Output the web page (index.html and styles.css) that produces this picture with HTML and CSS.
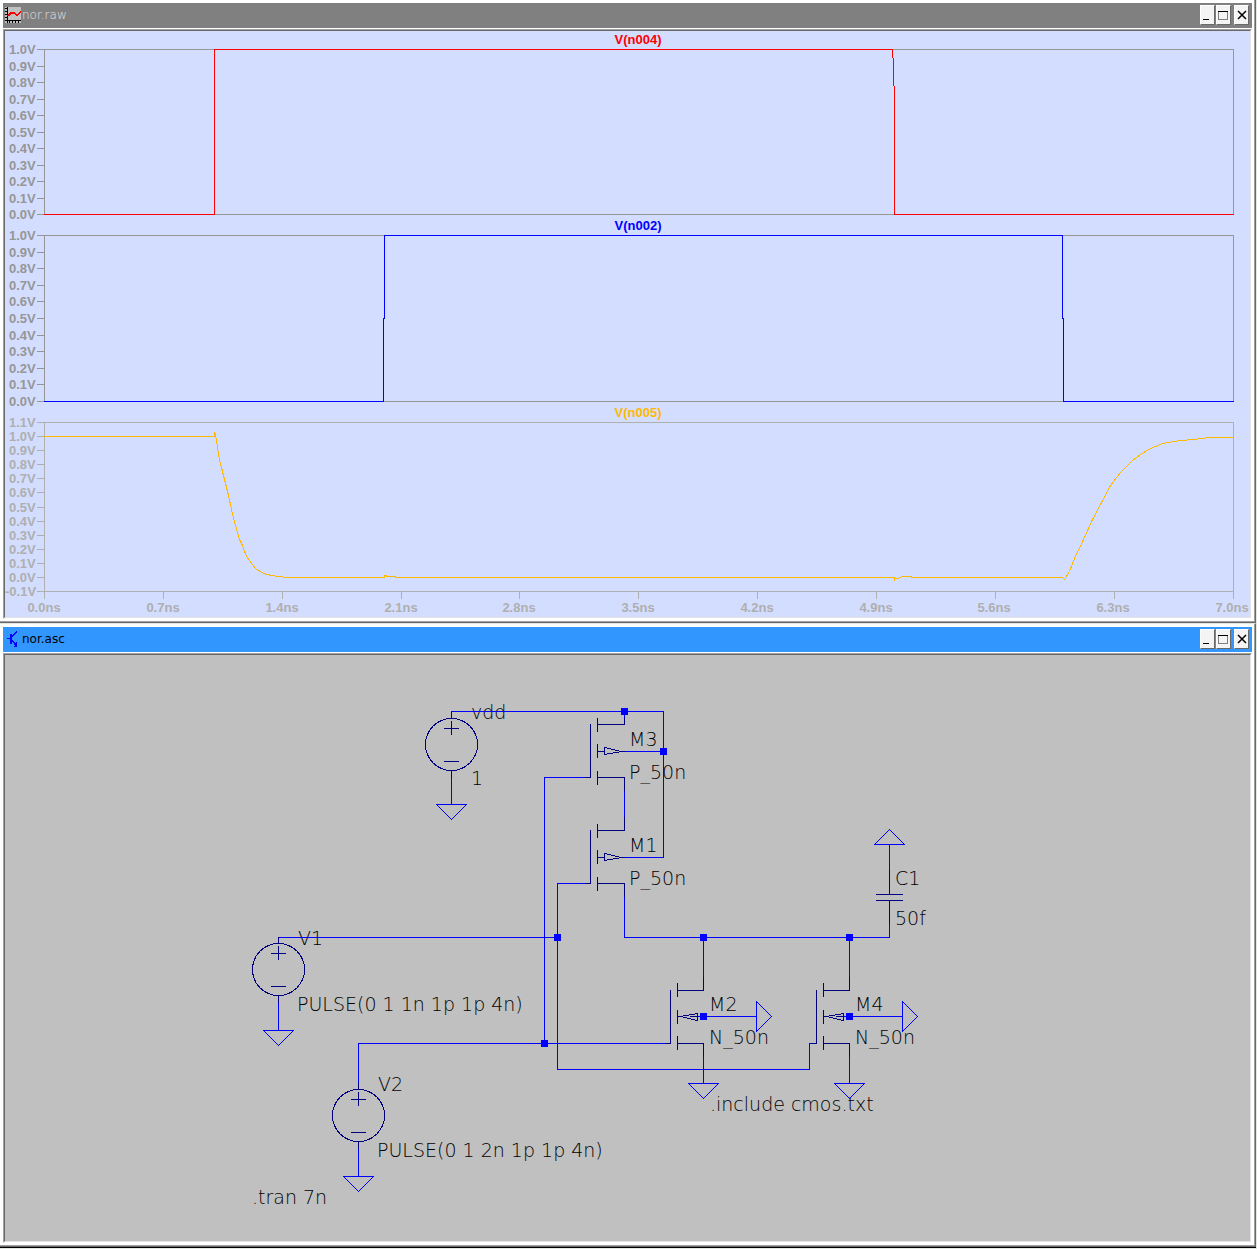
FILE: index.html
```html
<!DOCTYPE html>
<html lang="en">
<head>
<meta charset="utf-8">
<title>nor</title>
<link rel="stylesheet" href="styles.css">
</head>
<body>
<main class="workspace">
<section class="window">
  <header class="titlebar titlebar-inactive">
    <svg class="title-icon" viewBox="0 0 16 16" width="16" height="16" aria-hidden="true">
      <path fill="#c0c0c0" d="M0 0h16v16H0z"/>
      <path fill="#000" d="M2 0h1v16H2zM2 13h14v1H2zM0 1h2v1H0zM0 4h2v1H0zM0 7h2v1H0zM0 10h2v1H0zM0 13h2v1H0zM4 14h1v2H4zM7 14h1v2H7zM10 14h1v2h-1zM13 14h1v2h-1z"/>
      <path fill="none" stroke="#f00" stroke-width="2" d="M3 9l3-3.500h3l2 2h2l3-3"/>
    </svg>
    <h1 class="title">nor.raw</h1>
    <div class="controls">
      <button class="control" type="button" aria-label="Minimize"><svg viewBox="0 0 13 18" width="13" height="18"><path d="M2 13h6v1H2z"/></svg></button>
      <button class="control" type="button" aria-label="Maximize"><svg viewBox="0 0 13 18" width="13" height="18"><path d="M1 5h10v1H1z"/><path class="thin" d="M1 6v8h10V6h-1v7H2V6z"/></svg></button>
      <button class="control control-close" type="button" aria-label="Close"><svg viewBox="0 0 13 18" width="13" height="18"><path class="cross" d="M3 5l8 8M11 5l-8 8"/></svg></button>
    </div>
  </header>
  <div class="frame"><div class="canvas canvas-plot">
    <svg class="drawing" viewBox="5 31 1245 586" role="img" aria-label="Waveforms">
      <g class="axis-text">
        <text x="9" y="54">1.0V</text><text x="9" y="71">0.9V</text><text x="9" y="87">0.8V</text><text x="9" y="104">0.7V</text><text x="9" y="120">0.6V</text><text x="9" y="137">0.5V</text><text x="9" y="153">0.4V</text><text x="9" y="170">0.3V</text><text x="9" y="186">0.2V</text><text x="9" y="203">0.1V</text><text x="9" y="219">0.0V</text>
        <text x="9" y="240">1.0V</text><text x="9" y="257">0.9V</text><text x="9" y="273">0.8V</text><text x="9" y="290">0.7V</text><text x="9" y="306">0.6V</text><text x="9" y="323">0.5V</text><text x="9" y="340">0.4V</text><text x="9" y="356">0.3V</text><text x="9" y="373">0.2V</text><text x="9" y="389">0.1V</text><text x="9" y="406">0.0V</text>
      </g>
      <g class="axis-text axis-text-light">
        <text x="9" y="427">1.1V</text><text x="9" y="441">1.0V</text><text x="9" y="455">0.9V</text><text x="9" y="469">0.8V</text><text x="9" y="483">0.7V</text><text x="9" y="497">0.6V</text><text x="9" y="512">0.5V</text><text x="9" y="526">0.4V</text><text x="9" y="540">0.3V</text><text x="9" y="554">0.2V</text><text x="9" y="568">0.1V</text><text x="9" y="582">0.0V</text><text x="5" y="596">-0.1V</text>
      </g>
      <g class="axis-text axis-text-light centered">
        <text x="44" y="612">0.0ns</text><text x="163" y="612">0.7ns</text><text x="282" y="612">1.4ns</text><text x="401" y="612">2.1ns</text><text x="519" y="612">2.8ns</text><text x="638" y="612">3.5ns</text><text x="757" y="612">4.2ns</text><text x="876" y="612">4.9ns</text><text x="994" y="612">5.6ns</text><text x="1113" y="612">6.3ns</text><text x="1232" y="612">7.0ns</text>
      </g>
      <g class="trace-name centered">
        <text class="red" x="638" y="44">V(n004)</text>
        <text class="blue" x="638" y="230">V(n002)</text>
        <text class="amber" x="638" y="417">V(n005)</text>
      </g>
      <g class="lines" transform="translate(.5 .5)">
        <path class="axis" d="M44 49H1233V214H44ZM37 49h7M37 66h7M37 82h7M37 99h7M37 115h7M37 132h7M37 148h7M37 165h7M37 181h7M37 198h7M37 214h7"/>
        <path class="axis" d="M44 235H1233V401H44ZM37 235h7M37 252h7M37 268h7M37 285h7M37 301h7M37 318h7M37 335h7M37 351h7M37 368h7M37 384h7M37 401h7"/>
        <path class="axis axis-light" d="M44 422H1233V591H44ZM37 422h7M37 436h7M37 450h7M37 464h7M37 478h7M37 492h7M37 507h7M37 521h7M37 535h7M37 549h7M37 563h7M37 577h7M37 591h7M44 591v7M163 591v7M282 591v7M401 591v7M519 591v7M638 591v7M757 591v7M876 591v7M995 591v7M1114 591v7M1233 591v7"/>
        <path class="trace red-line" d="M44 214H214V49H892V57L893 58V85L894 86V214H1233"/>
        <path class="trace blue-line" d="M44 401H383V318H384V235H1062V318H1063V401H1233"/>
        <path class="trace amber-line" d="M44 436H214V432L215 434L219 460L221 467L228 495L233 518L239 539L242 545L246 556L255 568L263 573L271 575L277 576L287 577H384V575L388 576H395V577H894V580V578H897L902 576H911V577H1062L1064 579L1066 576L1069 571L1074 558L1083 539L1092 519L1101 502L1110 485L1120 472L1132 460L1140 454L1148 449L1162 443L1180 440L1193 439L1208 437H1233"/>
      </g>
    </svg>
  </div></div>
</section>

<section class="window">
  <header class="titlebar titlebar-active">
    <svg class="title-icon" viewBox="0 0 16 16" width="16" height="16" aria-hidden="true">
      <path fill="none" stroke="#00f" stroke-width="1" d="M2 7.500h4M7 5.500l5-5M7 9.500l5 5"/>
      <path fill="#00f" d="M5 3h2v10H5zM12 11v5H9v-1h1v-1h-1v-1h2v-2z"/>
    </svg>
    <h2 class="title">nor.asc</h2>
    <div class="controls">
      <button class="control" type="button" aria-label="Minimize"><svg viewBox="0 0 13 18" width="13" height="18"><path d="M2 13h6v1H2z"/></svg></button>
      <button class="control" type="button" aria-label="Maximize"><svg viewBox="0 0 13 18" width="13" height="18"><path d="M1 5h10v1H1z"/><path class="thin" d="M1 6v8h10V6h-1v7H2V6z"/></svg></button>
      <button class="control control-close" type="button" aria-label="Close"><svg viewBox="0 0 13 18" width="13" height="18"><path class="cross" d="M3 5l8 8M11 5l-8 8"/></svg></button>
    </div>
  </header>
  <div class="frame"><div class="canvas canvas-schematic">
    <svg class="drawing" viewBox="5 655 1245 586" role="img" aria-label="NOR gate schematic">
      <defs>
        <g id="source"><circle r="26"/><path d="M0 -32V-26M-7 -16H7M0 -23V-10M-7 17H7M0 26V33"/></g>
        <g id="ground"><path d="M-15 0H15L0 15Z"/></g>
        <g id="pmos"><path d="M-5 53H0V0M7 -6V7M7 20V33M7 47V60M7 0H34V-6M7 27H14M14 23V30L31 27ZM31 27H34M7 53H34V66"/></g>
        <g id="nmos"><path d="M-5 53H0V0M7 -7V6M7 20V33M7 46V59M7 0H33V-13M7 26H10L27 23V30L10 26M20 26H27M7 53H33V66"/></g>
        <path id="node" d="M-3 -3H4V4H-3Z"/>
      </defs>
      <g class="label">
        <text x="471" y="719">vdd</text><text x="471" y="785">1</text>
        <text x="629" y="746">M3</text><text x="629" y="779">P_50n</text>
        <text x="629" y="852">M1</text><text x="629" y="885">P_50n</text>
        <text x="895" y="885">C1</text><text x="895" y="925">50f</text>
        <text x="709" y="1011">M2</text><text x="709" y="1044">N_50n</text>
        <text x="855" y="1011">M4</text><text x="855" y="1044">N_50n</text>
        <text x="298" y="945">V1</text><text x="297" y="1011">PULSE(0 1 1n 1p 1p 4n)</text>
        <text x="378" y="1091">V2</text><text x="377" y="1157">PULSE(0 1 2n 1p 1p 4n)</text>
        <text x="710" y="1111">.include cmos.txt</text><text x="252" y="1204">.tran 7n</text>
      </g>
      <g class="lines" transform="translate(.5 .5)">
        <g class="wire">
          <path d="M451 711H663V857H624M624 711V718M624 751H663M544 777H585M544 777V1043M358 1083V1043H665M624 790V817M585 883H557V1069H809V1043H811M278 937H557M624 897V937H889V923M703 937V977M849 937V977M693 1016H756M839 1016H902M703 1056V1083M849 1056V1083M889 844V870M451 777V804M278 1002V1030M358 1148V1176"/>
          <use href="#ground" x="451" y="804"/><use href="#ground" x="278" y="1030"/><use href="#ground" x="358" y="1176"/>
          <use href="#ground" x="703" y="1083"/><use href="#ground" x="849" y="1083"/>
          <use href="#ground" transform="translate(756 1016) rotate(-90)"/><use href="#ground" transform="translate(902 1016) rotate(-90)"/>
          <use href="#ground" transform="translate(889 844) rotate(180)"/>
        </g>
        <g class="part">
          <use href="#source" x="451" y="744"/><use href="#source" x="278" y="969"/><use href="#source" x="358" y="1115"/>
          <use href="#pmos" x="590" y="724"/><use href="#pmos" x="590" y="830"/>
          <path d="M624 817V830"/>
          <use href="#nmos" x="670" y="990"/><use href="#nmos" x="816" y="990"/>
          <path d="M889 870V894M876 894H902M876 900H902M889 900V923"/>
        </g>
      </g>
      <g class="nodes">
        <use href="#node" x="624" y="711"/><use href="#node" x="663" y="751"/><use href="#node" x="557" y="937"/><use href="#node" x="703" y="937"/><use href="#node" x="849" y="937"/><use href="#node" x="703" y="1016"/><use href="#node" x="849" y="1016"/><use href="#node" x="544" y="1043"/>
      </g>
    </svg>
  </div></div>
</section>
</main>
</body>
</html>
```
FILE: styles.css
```css
* { box-sizing: border-box; }

body {
  margin: 0;
  background: #e3e8e3;
}

.workspace {
  margin-right: 1px;
  border-bottom: 1px solid #000;
}

.window {
  padding: 3px;
  background: #fff;
  border: 0 solid #696969;
  border-width: 0 1px 1px 0;
  box-shadow: inset -1px -1px #a0a0a0;
}

.window + .window {
  border-top: 1px solid #e3e3e3;
}

.titlebar {
  display: flex;
  align-items: center;
  height: 25px;
  padding: 0 3px 1px 2px;
  margin-bottom: 1px;
}

.titlebar-inactive { background: #808080; color: #c0c0c0; }
.titlebar-active { background: #3296ff; color: #000; }

.title-icon { shape-rendering: crispEdges; }

.title {
  flex: 1;
  margin: 0 0 0 1px;
  font: 12px/16px "DejaVu Sans", sans-serif;
}

.titlebar-inactive .title { font-weight: 200; color: #e0e0e0; }

.controls {
  display: flex;
  gap: 1px;
}

.control {
  width: 15px;
  height: 20px;
  padding: 0;
  background: #f4f4f4;
  border: 1px solid;
  border-color: #fff #696969 #696969 #fff;
}

.control-close { margin-left: 2px; }

.control svg { display: block; shape-rendering: crispEdges; }
.control .thin { fill: #808080; }
.control .cross {
  fill: none;
  stroke: #000;
  stroke-width: 1.5;
  shape-rendering: auto;
}

.frame {
  border: 1px solid;
  border-color: #a0a0a0 #fff #fff #a0a0a0;
}

.canvas {
  border: 1px solid;
  border-color: #696969 #e3e3e3 #e3e3e3 #696969;
}

.canvas-plot { background: #d3ddff; }
.canvas-schematic { background: #c0c0c0; }

.drawing {
  display: block;
  width: 100%;
  height: auto;
}

.axis-text, .trace-name { font: bold 13px "Liberation Sans", sans-serif; }
.axis-text { fill: #969696; }
.axis-text-light { fill: #afafaf; }
.centered { text-anchor: middle; }
.red { fill: #f00; }
.blue { fill: #00f; }
.amber { fill: #ffb900; }

.lines {
  fill: none;
  stroke-width: 1;
  stroke-linecap: square;
  shape-rendering: crispEdges;
}

.axis { stroke: #969696; }
.axis-light { stroke: #afafaf; }
.red-line { stroke: #f00; }
.blue-line { stroke: #00f; }
.amber-line { stroke: #ffb900; }

.label {
  fill: #000;
  font: 200 19px "DejaVu Sans", sans-serif;
}

.wire { stroke: #00f; }
.part { stroke: #000080; }
.nodes { fill: #00f; shape-rendering: crispEdges; }
```
